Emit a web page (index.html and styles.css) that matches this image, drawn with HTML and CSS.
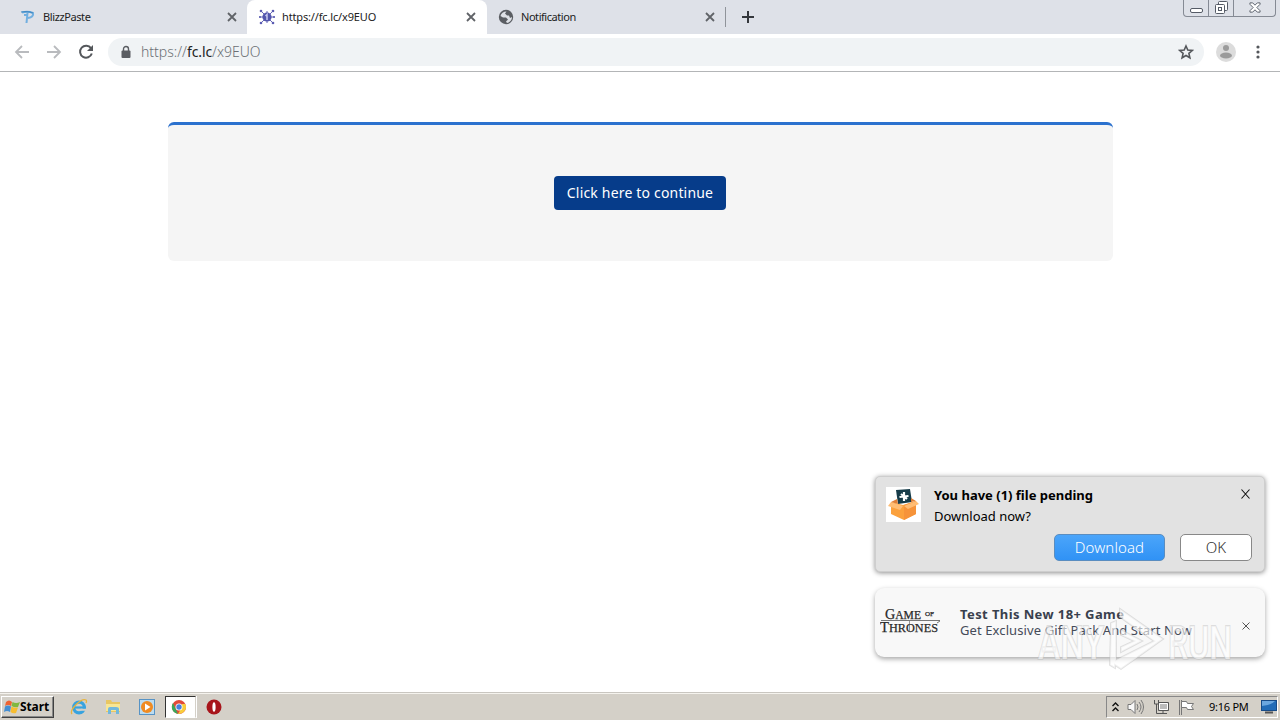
FILE: index.html
```html
<!DOCTYPE html>
<html lang="en">
<head>
    <meta charset="UTF-8">
    <title>https://fc.lc/x9EUO</title>
    <link rel="stylesheet" href="styles.css">
</head>
<body>
    <!-- tabs -->
    <div class="tabs">
        <div class="tab">
            <svg class="favicon" viewBox="0 0 16 16"><path d="M2 3.5Q8 2 13 4Q14 8 8 9M4 6H8M7.5 4L6.5 14" fill="none" stroke="#71afe0" stroke-width="2"/><path d="M1 3Q8 2 13 4" fill="none" stroke="#438bc4" stroke-width="1.2"/></svg>
            <span class="tab-title blizz">BlizzPaste</span>
            <svg class="close" viewBox="0 0 10 10"><path d="M1 1L9 9M9 1L1 9"/></svg>
        </div>
        <div class="tab active">
            <svg class="favicon" viewBox="0 0 16 16"><g stroke="#6767b8" stroke-width="1"><path d="M2 2L14 14M14 2L2 14M0 8H16M8 2V14"/></g><g fill="#5b5cb2"><circle cx="2" cy="2" r="1.3"/><circle cx="14" cy="2" r="1.3"/><circle cx="2" cy="14" r="1.3"/><circle cx="14" cy="14" r="1.3"/><circle cx="1" cy="8" r="1"/><circle cx="15" cy="8" r="1"/></g><circle cx="8" cy="8" r="4.6" fill="#5255ad"/><path d="M6.5 7L8 5.5V11" fill="none" stroke="#c5c6ed" stroke-width="1.5"/></svg>
            <span class="tab-title link">https://fc.lc/x9EUO</span>
            <svg class="close" viewBox="0 0 10 10"><path d="M1 1L9 9M9 1L1 9"/></svg>
        </div>
        <div class="tab last">
            <svg class="favicon" viewBox="0 0 16 16"><circle cx="8" cy="8" r="7.2" fill="#5b5e63"/><path d="M8.5 2.5L7 4.5L9 6.5L11 6.5L12 9L14 8C14 11 12 13.5 9 14L8 12.5L10 10.5L8 8.5H5L2.5 7C3 4.5 5.5 2.5 8.5 2.5Z" fill="#dee1e6"/></svg>
            <span class="tab-title notif">Notification</span>
            <svg class="close" viewBox="0 0 10 10"><path d="M1 1L9 9M9 1L1 9"/></svg>
        </div>
        <div class="new-tab">
            <svg width="12" height="12" viewBox="0 0 12 12"><path d="M6 0V12M0 6H12" stroke="#34373c" stroke-width="2"/></svg>
        </div>
        <div class="window-buttons">
            <span><svg width="13" height="6" viewBox="0 0 13 6"><rect x=".5" y=".5" width="12" height="4" rx="1.5" fill="#fff" stroke="#555b66"/></svg></span>
            <span><svg width="13" height="13" viewBox="0 0 13 13"><g fill="#fff" stroke="#555b66"><rect x="3.5" y=".5" width="9" height="9" rx="1"/><rect x=".5" y="3.5" width="9" height="9" rx="1"/><rect x="3.5" y="6.5" width="3" height="3"/></g></svg></span>
            <span class="wide"><svg width="12" height="11" viewBox="0 0 13 11"><path d="M1 .5H4L6.5 3L9 .5H12V2L8.5 5.5L12 9V10.5H9L6.5 8L4 10.5H1V9L4.5 5.5L1 2Z" fill="#fff" stroke="#555b66"/></svg></span>
        </div>
    </div>

    <!-- address bar -->
    <div class="toolbar">
        <svg class="nav" viewBox="0 0 16 16"><path d="M15 8H2M8 2L2 8L8 14" fill="none" stroke="#b9bbbe" stroke-width="1.8"/></svg>
        <svg class="nav" viewBox="0 0 16 16"><path d="M1 8H14M8 2L14 8L8 14" fill="none" stroke="#b9bbbe" stroke-width="1.8"/></svg>
        <svg class="nav" viewBox="0 0 16 16"><path d="M13 4.2A6 6 0 1 0 13.8 9.5" fill="none" stroke="#54575b" stroke-width="2"/><path d="M15 1V7H9Z" fill="#54575b"/></svg>
        <div class="address">
            <svg width="10" height="14" viewBox="0 0 10 14"><path d="M2.5 6V4A2.5 2.5 0 0 1 7.5 4V6" fill="none" stroke="#5a5d62" stroke-width="1.4"/><rect x=".5" y="5.5" width="9" height="7.5" rx="1" fill="#5a5d62"/></svg>
            <span class="url">https://<b>fc.lc</b>/x9EUO</span>
            <svg class="star" viewBox="0 0 16 16"><path d="M8 2L9.8 6.1L14.2 6.5L10.9 9.4L11.9 13.8L8 11.5L4.1 13.8L5.1 9.4L1.8 6.5L6.2 6.1Z" fill="none" stroke="#54575b" stroke-width="1.6"/></svg>
        </div>
        <svg class="avatar" viewBox="0 0 20 20"><circle cx="10" cy="10" r="10" fill="#dcdcdc"/><circle cx="10" cy="6" r="3" fill="#9b9b9b"/><ellipse cx="10" cy="13.5" rx="6" ry="3" fill="#9b9b9b"/></svg>
        <svg class="menu" viewBox="0 0 4 16"><g fill="#54575b"><circle cx="2" cy="3" r="1.6"/><circle cx="2" cy="8" r="1.6"/><circle cx="2" cy="13" r="1.6"/></g></svg>
    </div>

    <!-- page -->
    <div class="page">
        <div class="box">
            <button class="continue"><span>Click here to continue</span></button>
        </div>
    </div>

    <!-- popups -->
    <div class="popups">
        <div class="popup pending">
            <svg class="package" viewBox="0 0 35 35"><rect width="35" height="35" fill="#fff"/><path d="M10 3L24 2L26 15L12 17Z" fill="#173c49"/><path d="M18 5V14M13.5 10L22.5 9M15 7L21 12" stroke="#fff" stroke-width="2.2"/><path d="M5 15L17 18L30 14V27L18 33L5 27Z" fill="#fba13d"/><path d="M18 18L30 14V27L18 33Z" fill="#f6933a"/><path d="M5 15L17 19L14 23L2 19ZM30 14L18 19L22 22L33 17Z" fill="#ffbd74"/><path d="M5 15L11 12L12 17ZM30 14L25 11V15Z" fill="#df8038"/></svg>
            <div class="message">
                <div class="head">
                    <strong>You have (1) file pending</strong>
                    <svg width="9" height="10" viewBox="0 0 9 10"><path d="M.5 .5L8.5 9.5M8.5 .5L.5 9.5" stroke="#111" stroke-width="1.1"/></svg>
                </div>
                <p><span>Download now?</span></p>
                <div class="actions">
                    <button class="download"><span>Download</span></button>
                    <button class="ok">OK</button>
                </div>
            </div>
        </div>
        <div class="popup game">
            <svg class="thrones" viewBox="0 0 62 28"><g font-family="Liberation Serif, serif" fill="#292929" stroke="#292929" stroke-width=".25"><text x="5" y="12.5" font-size="14" textLength="36" lengthAdjust="spacingAndGlyphs">G<tspan font-size="11.5">AME</tspan></text><text x="45" y="10" font-size="7" textLength="9" lengthAdjust="spacingAndGlyphs">OF</text><text x="0" y="25.5" font-size="15" textLength="58" lengthAdjust="spacingAndGlyphs">T<tspan font-size="12.5">HRONES</tspan></text></g><path d="M1 14.5H60M57 17L60 15" stroke="#555" stroke-width=".8"/><path d="M29.5 15V26" stroke="#555" stroke-width=".6"/></svg>
            <div class="offer">
                <strong><span>Test This New 18+ Game</span></strong>
                <p><span>Get Exclusive Gift Pack And Start Now</span></p>
            </div>
            <svg width="8" height="8" viewBox="0 0 8 8"><path d="M.5 .5L7.5 7.5M7.5 .5L.5 7.5" stroke="#555"/></svg>
        </div>
    </div>

    <svg class="watermark" viewBox="0 0 210 70">
        <g font-family="Roboto, sans-serif" font-size="47" font-weight="500" fill="#fff" fill-opacity=".6" stroke="#bbb" stroke-opacity=".45" stroke-width="1.8" paint-order="stroke">
            <text x="8" y="54" textLength="66" lengthAdjust="spacingAndGlyphs">ANY</text>
            <text x="138" y="54" textLength="64" lengthAdjust="spacingAndGlyphs">RUN</text>
            <path d="M81 18L86 16V55L124 36L90 12V4L133 34L91 64L85 60V63L80 60ZM91 25L112 36L91 47V42L104 36L91 30Z"/>
        </g>
    </svg>

    <!-- taskbar -->
    <div class="taskbar">
        <div class="start">
            <svg width="16" height="16" viewBox="0 0 16 16"><path d="M2 3Q5 0 8 3L7 7Q4 5 1 7Z" fill="#ee6332"/><path d="M8.5 3Q12 5 16 3L14 8Q11 9 7.5 7Z" fill="#80b840"/><path d="M1 7.5Q4 5.5 7 7.5L6 13Q3 11 0 13Z" fill="#448ed2"/><path d="M7.5 7.5Q11 9.5 14 8.5L12 14Q9 15 6.5 13Z" fill="#f7bd30"/></svg>
            <span>Start</span>
        </div>
        <div class="launch">
            <svg width="18" height="18" viewBox="0 0 18 18"><circle cx="9" cy="9.5" r="5.3" fill="none" stroke="#38a3df" stroke-width="3.2"/><path d="M5 9.5H16" stroke="#38a3df" stroke-width="2.2"/><path d="M11 11.8H17" stroke="#d4d0c8" stroke-width="2"/><path d="M2 16C-1 12 11 0 16 2Q17 3 16 5" fill="none" stroke="#e7b43e" stroke-width="1.3"/></svg>
            <svg width="18" height="18" viewBox="0 0 18 18"><path d="M2 2H7L8 4H16V14H2Z" fill="#e8c662"/><path d="M2 6H16V13H2Z" fill="#f8e694"/><path d="M4 16V11Q4 9 6 9H12Q15 9 15 11V16H12V12H7V16Z" fill="#72b8dc"/></svg>
            <svg width="18" height="18" viewBox="0 0 18 18"><rect x="1.5" y="1.5" width="15" height="15" fill="#bcdcf0" stroke="#5793c5"/><circle cx="9" cy="9" r="6" fill="#f08b22"/><path d="M7 5.5L12.5 9L7 12.5Z" fill="#fff"/></svg>
        </div>
        <div class="running">
            <svg width="16" height="16" viewBox="0 0 16 16"><circle cx="8" cy="8" r="7" fill="#e14b39"/><path d="M2 4L7 14.9A7 7 0 0 1 2 4Z" fill="#39a85a"/><path d="M14.3 5A7 7 0 0 1 7 14.9L11 8V5Z" fill="#f9cd3a"/><circle cx="8" cy="8" r="3.5" fill="#fff"/><circle cx="8" cy="8" r="2.7" fill="#477fdd"/></svg>
        </div>
        <svg class="opera" viewBox="0 0 16 16"><circle cx="8" cy="8" r="7.5" fill="#a8151b"/><ellipse cx="8" cy="8" rx="1.6" ry="4.8" fill="#fff"/></svg>
        <div class="tray">
            <svg width="7" height="10" viewBox="0 0 7 10"><path d="M.5 4L3.5 1L6.5 4M.5 9L3.5 6L6.5 9" fill="none" stroke="#111" stroke-width="1.4"/></svg>
            <svg width="18" height="16" viewBox="0 0 18 16"><path d="M1 5.5H4L8 1.5V14.5L4 10.5H1Z" fill="#f9f9f9" stroke="#777"/><path d="M10 5Q12 8 10 11M12 3Q16 8 12 13M14 1Q19 8 14 15" fill="none" stroke="#777"/></svg>
            <svg width="17" height="16" viewBox="0 0 17 16"><path d="M5.5 3.5H15.5V11.5H5.5Z" fill="#bbb" stroke="#555"/><path d="M6.5 4.5H14.5V10.5H6.5Z" fill="none" stroke="#fff"/><path d="M10 12V14M7 14.5H14" stroke="#555"/><path d="M1.5 1V5H5.5V1M3.5 5V14.5H7" fill="none" stroke="#555"/></svg>
            <svg width="17" height="16" viewBox="0 0 17 16"><path d="M1.5 1V16M3.5 1V16" stroke="#777"/><path d="M3.5 2.5H8.5L9.5 4.5H15.5L13.5 7.5L15.5 10.5H9.5L8.5 8.5H3.5Z" fill="#fff" stroke="#777"/></svg>
            <span>9:16 PM</span>
            <svg width="16" height="14" viewBox="0 0 16 14"><rect x=".5" y=".5" width="15" height="10" fill="#226cb7" stroke="#174b87"/><path d="M1 1H14Q11 5 1 6Z" fill="#6ba7df"/><path d="M4 12.5H12" stroke="#555" stroke-width="2"/></svg>
        </div>
    </div>
</body>
</html>
```
FILE: styles.css
```css
* {
    box-sizing: border-box;
}
body {
    margin: 0;
    width: 1280px;
    height: 720px;
    display: flex;
    flex-direction: column;
    position: relative;
    overflow: hidden;
    background: #fff;
    font-family: "Noto Sans", sans-serif;
    color: #222;
}
svg {
    display: block;
    flex: none;
}
p {
    margin: 0;
}
span, strong {
    white-space: nowrap;
}
.tabs {
    height: 34px;
    flex: none;
    display: flex;
    padding-left: 8px;
    background: #dee1e8;
}
.tab {
    width: 239px;
    height: 34px;
    display: flex;
    align-items: center;
    padding: 0 10px 0 12px;
}
.tab.active {
    width: 240px;
    padding-right: 11px;
    background: #fff;
    border-radius: 8px 8px 0 0;
}
.tab.last {
    width: 238px;
    padding-left: 11px;
}
.favicon {
    width: 16px;
    height: 16px;
    margin-right: 7px;
}
.tab-title {
    font-size: 11px;
    flex: 1;
    padding-bottom: 2px;
}
.blizz {
    letter-spacing: -0.4px;
}
.link {
    letter-spacing: -0.15px;
}
.notif {
    letter-spacing: -0.45px;
}
.close {
    width: 10px;
    height: 10px;
    fill: none;
    stroke: #606368;
    stroke-width: 1.8;
}
.new-tab {
    height: 20px;
    margin-top: 7px;
    padding: 4px 0 0 16px;
    border-left: 1px solid #90949a;
}
.window-buttons {
    margin: 0 4px 0 auto;
    height: 17px;
    display: flex;
    border: 1px solid #858a94;
    border-top: none;
    border-radius: 0 0 4px 4px;
}
.window-buttons span {
    width: 25px;
    display: flex;
    align-items: flex-end;
    justify-content: center;
    padding-bottom: 2px;
    border-right: 1px solid #858a94;
}
.window-buttons .wide {
    width: 41px;
    padding-bottom: 3px;
    border: none;
}
.toolbar {
    height: 38px;
    flex: none;
    display: flex;
    align-items: center;
    padding: 0 20px 1px 14px;
    border-bottom: 1px solid #b3b5b7;
}
.nav {
    width: 16px;
    height: 16px;
    margin-right: 16px;
}
.address {
    width: 1096px;
    height: 28px;
    margin-left: -2px;
    border-radius: 14px;
    background: #f0f3f5;
    display: flex;
    align-items: center;
    padding: 0 10px 0 13px;
}
.url {
    font-size: 14px;
    font-weight: 300;
    color: #6b6f74;
    margin-left: 10px;
    padding-bottom: 2px;
}
.url b {
    color: #222;
    font-weight: 400;
    letter-spacing: -0.1px;
}
.star {
    width: 16px;
    height: 16px;
    margin-left: auto;
}
.avatar {
    width: 20px;
    height: 20px;
    margin-left: 12px;
}
.menu {
    width: 4px;
    height: 16px;
    margin-left: auto;
}
.page {
    flex: 1;
    padding: 50px 167px 0 168px;
}
.box {
    height: 139px;
    padding: 51px 1px 0 0;
    background: #f5f5f5;
    border-top: 3px solid #2b71ce;
    border-radius: 6px;
    text-align: center;
}
button {
    font-family: inherit;
    padding: 0;
}
.continue {
    width: 172px;
    height: 34px;
    padding-bottom: 2px;
    border: none;
    border-radius: 4px;
    background: #063c8a;
    color: #fff;
    font-size: 14px;
    letter-spacing: 0.18px;
}
.popups {
    position: absolute;
    right: 15px;
    top: 476px;
    width: 390px;
    display: flex;
    flex-direction: column;
    gap: 16px;
}
.popup {
    display: flex;
    box-shadow: 0 1px 5px rgba(0, 0, 0, 0.45);
}
.pending {
    height: 96px;
    padding: 10px 12px 0 10px;
    border-radius: 5px;
    border: 1px solid #cecece;
    background: #e2e2e2;
}
.package {
    width: 35px;
    height: 35px;
}
.message {
    flex: 1;
    margin-left: 13px;
    font-size: 13px;
    color: #000;
}
.head {
    display: flex;
    justify-content: space-between;
    height: 18px;
    line-height: 16px;
    padding-right: 2px;
}
.head svg {
    margin-top: 2px;
}
.message p {
    line-height: 18px;
    margin-top: 2px;
}
.actions {
    display: flex;
    justify-content: flex-end;
    gap: 15px;
    margin-top: 9px;
}
.actions button {
    height: 27px;
    padding-bottom: 1px;
    border: 1px solid #888;
    border-radius: 5px;
    font-size: 15px;
}
.actions .download {
    width: 111px;
    color: #fff;
    font-weight: 300;
    letter-spacing: 0.1px;
    border-color: #5a8dc0;
    background: linear-gradient(#4ba5fa, #3092f5);
}
.actions .ok {
    width: 72px;
    background: #fff;
    color: #333;
    font-weight: 300;
}
.game {
    height: 69px;
    align-items: center;
    padding: 0 15px 2px 5px;
    border-radius: 9px;
    background: #f8f8f8;
    box-shadow: 0 2px 5px rgba(0, 0, 0, 0.35);
}
.thrones {
    width: 62px;
    height: 28px;
    margin-bottom: 3px;
}
.offer {
    flex: 1;
    margin-left: 18px;
    font-size: 13px;
    line-height: 16px;
    color: #454b58;
}
.offer strong {
    display: block;
    color: #39404d;
    letter-spacing: 0.4px;
}
.offer p {
    letter-spacing: 0.1px;
}
.game > svg:last-child {
    margin-top: 8px;
}
.watermark {
    position: absolute;
    left: 1030px;
    top: 605px;
    width: 210px;
    height: 70px;
}
.taskbar {
    height: 28px;
    flex: none;
    display: flex;
    align-items: center;
    padding-top: 1px;
    background: #d4d0c8;
    border-top: 1px solid #c9c6c0;
    box-shadow: inset 0 1px #f5f3ee;
}
.start {
    width: 53px;
    height: 22px;
    margin-left: 1px;
    display: flex;
    align-items: center;
    padding-left: 2px;
    border: 1px solid;
    border-color: #fff #404040 #404040 #fff;
    box-shadow: inset -1px -1px #888;
    font-size: 12px;
    font-weight: bold;
    letter-spacing: -0.1px;
    color: #000;
}
.start span {
    padding-bottom: 1px;
}
.launch {
    display: flex;
    gap: 16px;
    margin-left: 16px;
}
.running {
    width: 31px;
    height: 22px;
    margin-left: 9px;
    padding: 2px 0 0 5px;
    background: #fff;
    border: 1px solid;
    border-color: #333 #d4d0c8 #fff #333;
    box-shadow: 1px 0 #fff;
}
.opera {
    width: 16px;
    height: 16px;
    margin-left: 10px;
}
.tray {
    height: 22px;
    margin: 0 2px 0 auto;
    width: 172px;
    display: flex;
    align-items: center;
    gap: 8px;
    padding-left: 5px;
    border: 1px solid;
    border-color: #888 #fff #fff #888;
    font-size: 11px;
    color: #000;
}
.tray span {
    margin-left: 6px;
    padding-bottom: 1px;
    letter-spacing: -0.25px;
}
.tray svg:last-child {
    margin-left: auto;
}
```
